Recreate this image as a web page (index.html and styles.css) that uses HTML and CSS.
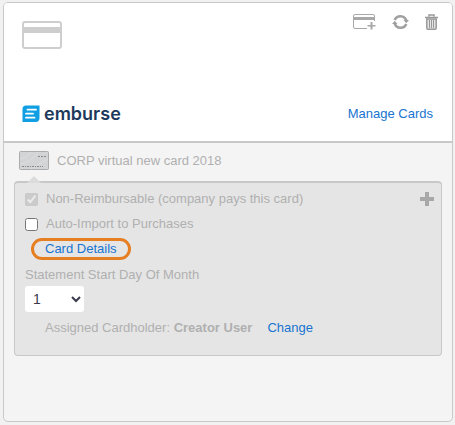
FILE: index.html
```html
<!DOCTYPE html>
<html lang="en">
<head>
    <meta charset="UTF-8">
    <meta name="viewport" content="width=device-width, initial-scale=1.0">
    <title>Manage Cards</title>
    <link rel="stylesheet" href="styles.css">
</head>
<body>
    <div class="card">
        <div class="card-header">
            <div class="header-top">
                <svg class="card-icon" width="40" height="28" viewBox="0 0 40 28">
                    <rect x="1" y="1" width="38" height="26" rx="2" fill="none" stroke="#cecece" stroke-width="2"/>
                    <rect x="1" y="6" width="38" height="6" fill="#cecece"/>
                </svg>
                <div class="actions">
                    <button type="button" class="icon-btn" aria-label="Add card">
                        <svg width="23" height="16" viewBox="0 0 23 16">
                            <path d="M14 14.500H2a1.500 1.500 0 0 1-1.500-1.500V2A1.500 1.500 0 0 1 2 .500h18A1.500 1.500 0 0 1 21.500 2v5" fill="none" stroke="#a8a8a8"/>
                            <path d="M1 3h21v3H1zM17.500 8h2v3h3v1.500h-3v3h-2v-3h-3V11h3z" fill="#a8a8a8"/>
                        </svg>
                    </button>
                    <button type="button" class="icon-btn" aria-label="Refresh">
                        <svg width="17" height="16" viewBox="0 0 17 16">
                            <path d="M2.700 6A6.200 6.200 0 0 1 14.300 6.500M14.300 10A6.200 6.200 0 0 1 2.700 9.500" fill="none" stroke="#a0a0a0" stroke-width="2.500"/>
                            <path d="M11.500 6H17L14.300 9.300zM0 10h5.500L2.700 6.700z" fill="#a0a0a0"/>
                        </svg>
                    </button>
                    <button type="button" class="icon-btn" aria-label="Delete">
                        <svg width="13" height="16" viewBox="0 0 13 16">
                            <path d="M4 2.500V1h5v1.500M0 3.500h13" fill="none" stroke="#999" stroke-width="1.500"/>
                            <path d="M1.800 5v9q0 1.300 1.200 1.300h7q1.200 0 1.200-1.300V5z" fill="#e4e4e4" stroke="#999" stroke-width="1.500"/>
                            <path d="M4.500 6v8M6.500 6v8M8.500 6v8" stroke="#999"/>
                        </svg>
                    </button>
                </div>
            </div>
            <div class="header-bottom">
                <div class="logo">
                    <svg width="18" height="18" viewBox="0 0 18 18">
                        <path d="M4 .500h13.500V13a4 4 0 0 1-4 4H.500V4A3.500 3.500 0 0 1 4 .500z" fill="#0f9fe2"/>
                        <path d="M5.500 4.700H14M4 8.700h7M4 12.700h8.500" stroke="#fff" stroke-width="1.800" stroke-linecap="round"/>
                    </svg>
                    <span class="logo-name">emburse</span>
                </div>
                <a href="#" class="link">Manage Cards</a>
            </div>
        </div>
        <div class="card-body">
            <div class="card-title">
                <svg width="30" height="19" viewBox="0 0 30 19">
                    <rect x=".5" y=".5" width="29" height="18" rx="1" fill="#d2d4d6" stroke="#a9abad"/>
                    <path d="M1 13Q12 12 19 1M1 8Q8 7 12 1M12 18Q22 12 29 8" fill="none" stroke="#dcdddf"/>
                    <path d="M19 5.500h8" stroke="#85898d" stroke-dasharray="2 1"/>
                    <path d="M3 15.500h21" stroke="#85898d" stroke-dasharray="2 1 1 1"/>
                </svg>
                <span>CORP virtual new card 2018</span>
            </div>
            <div class="details">
                <div class="row">
                    <input type="checkbox" id="nonReimbursable" class="check" checked disabled>
                    <label for="nonReimbursable">Non-Reimbursable (company pays this card)</label>
                    <button type="button" class="icon-btn add-btn" aria-label="Add">
                        <svg width="14" height="14" viewBox="0 0 14 14">
                            <path d="M5 0h4v5h5v4H9v5H5V9H0V5h5z" fill="#a8a8a8"/>
                        </svg>
                    </button>
                </div>
                <div class="row">
                    <input type="checkbox" id="autoImport" class="check">
                    <label for="autoImport">Auto-Import to Purchases</label>
                </div>
                <a href="#" class="link highlight">Card Details</a>
                <label for="startDay">Statement Start Day Of Month</label>
                <select id="startDay" class="start-day">
                    <option>1</option>
                    <option>2</option>
                    <option>3</option>
                </select>
                <div class="holder">
                    <span>Assigned Cardholder: <b>Creator User</b></span>
                    <a href="#" class="link">Change</a>
                </div>
            </div>
        </div>
    </div>
</body>
</html>
```

FILE: styles.css
```css
* {
    box-sizing: border-box;
}

body {
    margin: 0;
    padding: 2px 2px 3px 3px;
    min-height: 100vh;
    display: flex;
    background-color: #f1f1f1;
    color: #b0b0b0;
    font-family: "Liberation Sans", Arial, sans-serif;
    font-size: 13px;
    line-height: 16px;
}

.card {
    flex: 1;
    display: flex;
    flex-direction: column;
    border: 1px solid #c8c8c8;
    border-radius: 5px;
    background-color: #f4f4f4;
    overflow: hidden;
}

.card-header {
    padding: 10px 14px 16px 18px;
    background-color: #fff;
    border-bottom: 2px solid #c8c8c8;
}

.header-top,
.header-bottom {
    display: flex;
    justify-content: space-between;
}

.card-icon {
    margin-top: 8px;
}

.actions {
    display: flex;
    align-items: flex-start;
    gap: 16px;
}

.icon-btn {
    display: flex;
    padding: 0;
    border: none;
    background: none;
    cursor: pointer;
}

.actions .icon-btn {
    padding-top: 1px;
}

.header-bottom {
    align-items: center;
    margin-top: 54px;
    padding-right: 5px;
}

.logo {
    display: flex;
    align-items: center;
    gap: 4px;
}

.logo-name {
    color: #1d3a5c;
    font-family: "Inter", sans-serif;
    font-size: 18px;
    font-weight: 600;
    line-height: 22px;
}

.link {
    color: #1874d0;
    text-decoration: none;
}

.card-body {
    padding: 8px 10px;
}

.card-title {
    display: flex;
    align-items: center;
    gap: 8px;
    padding-left: 5px;
}

.details {
    position: relative;
    display: flex;
    flex-direction: column;
    align-items: flex-start;
    margin-top: 11px;
    padding: 8px 7px 19px 10px;
    border: 1px solid #c8c8c8;
    border-top-width: 2px;
    border-radius: 4px;
    background-color: #e5e5e5;
}

/* little arrow pointing at the card picture */
.details::before {
    content: "";
    position: absolute;
    top: -7px;
    left: 12px;
    border: 7px solid transparent;
    border-top-width: 0;
    border-bottom-color: #dcdcdc;
}

.row {
    display: flex;
    align-items: center;
    align-self: stretch;
    gap: 8px;
    margin-bottom: 9px;
}

.check {
    width: 13px;
    height: 13px;
    margin: 0;
}

.add-btn {
    margin-left: auto;
}

.highlight {
    margin: -3px 0 7px 6px;
    padding: 0 11px;
    border: 3px solid #e67e22;
    border-radius: 11px;
}

.start-day {
    width: 59px;
    height: 26px;
    margin-top: 3px;
    padding: 0 4px;
    border: none;
    border-radius: 3px;
    background-color: #fff;
    color: #3a3a4c;
    font-family: inherit;
    font-size: 14px;
}

.holder {
    display: flex;
    gap: 15px;
    margin-top: 8px;
    padding-left: 20px;
}
```
